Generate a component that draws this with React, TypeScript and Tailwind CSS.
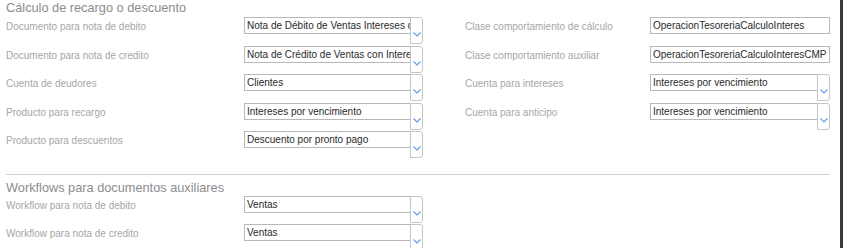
import React from "react";

const font = { fontFamily: '"Liberation Sans", Arial, sans-serif' };

function Chevron() {
  return (
    <svg width="8" height="5" viewBox="0 0 8 5" className="block">
      <polyline points="0.5,0.5 4,4 7.5,0.5" fill="none" stroke="#5f9ae0" strokeWidth="1.1" />
    </svg>
  );
}

function SelectBox({ value, width }: { value: string; width: string }) {
  return (
    <div className={`flex items-start ${width}`}>
      <div className="flex-1 h-[17px] border border-[#b8b8b8] bg-white px-[2px] text-[10px] leading-[15px] text-[#2a2a2a] whitespace-nowrap overflow-hidden">
        {value}
      </div>
      <div className="w-[13px] h-[27px] -ml-px border border-[#c6c6c6] rounded-r-[3px] flex justify-center pt-[14px]">
        <Chevron />
      </div>
    </div>
  );
}

function TextBox({ value, width }: { value: string; width: string }) {
  return (
    <div className={`${width} h-[17px] border border-[#b8b8b8] bg-white px-[2px] text-[10px] leading-[15px] text-[#2a2a2a] whitespace-nowrap overflow-hidden`}>
      {value}
    </div>
  );
}

type Field = { label: string; value: string; kind: "select" | "text" } | null;

function Row({ left, right, h = "h-[28.6px]" }: { left: Field; right: Field; h?: string }) {
  return (
    <div className={`flex ${h}`}>
      {left && (
        <>
          <div className="w-[238px] pt-[1px] text-[10px] leading-[17px] text-[#a6a6a6]">{left.label}</div>
          {left.kind === "select" ? (
            <SelectBox value={left.value} width="w-[179px]" />
          ) : (
            <TextBox value={left.value} width="w-[179px]" />
          )}
        </>
      )}
      <div className="w-[42px]" />
      {right && (
        <>
          <div className="w-[185px] pt-[1px] text-[10px] leading-[17px] text-[#a6a6a6]">{right.label}</div>
          {right.kind === "select" ? (
            <SelectBox value={right.value} width="w-[180px]" />
          ) : (
            <TextBox value={right.value} width="w-[180px]" />
          )}
        </>
      )}
    </div>
  );
}

const calculo: { left: Field; right: Field }[] = [
  {
    left: { label: "Documento para nota de debito", value: "Nota de Débito de Ventas Intereses de mora", kind: "select" },
    right: { label: "Clase comportamiento de cálculo", value: "OperacionTesoreriaCalculoInteres", kind: "text" },
  },
  {
    left: { label: "Documento para nota de credito", value: "Nota de Crédito de Ventas con Intereses", kind: "select" },
    right: { label: "Clase comportamiento auxiliar", value: "OperacionTesoreriaCalculoInteresCMP", kind: "text" },
  },
  {
    left: { label: "Cuenta de deudores", value: "Clientes", kind: "select" },
    right: { label: "Cuenta para intereses", value: "Intereses por vencimiento", kind: "select" },
  },
  {
    left: { label: "Producto para recargo", value: "Intereses por vencimiento", kind: "select" },
    right: { label: "Cuenta para anticipo", value: "Intereses por vencimiento", kind: "select" },
  },
  {
    left: { label: "Producto para descuentos", value: "Descuento por pronto pago", kind: "select" },
    right: null,
  },
];

const workflows: { left: Field; right: Field }[] = [
  { left: { label: "Workflow para nota de debito", value: "Ventas", kind: "select" }, right: null },
  { left: { label: "Workflow para nota de credito", value: "Ventas", kind: "select" }, right: null },
];

export default function App() {
  return (
    <div className="w-[843px] h-[248px] flex bg-white overflow-hidden" style={font}>
      <main className="flex-1 pl-[6px] pr-[4px]">
        <h2 className="h-[17px] text-[12.75px] leading-[16px] text-[#8c8c8c]">Cálculo de recargo o descuento</h2>
        {calculo.map((r, i) => (
          <Row key={i} left={r.left} right={r.right} />
        ))}
        <hr className="mt-[14px] w-[824px] border-t border-[#d0d0d0]" />
        <h2 className="mt-[5px] h-[16px] text-[12.75px] leading-[16px] text-[#8c8c8c]">Workflows para documentos auxiliares</h2>
        {workflows.map((r, i) => (
          <Row key={i} left={r.left} right={r.right} h="h-[28px]" />
        ))}
      </main>
      <div className="w-[3px] bg-[#3b3b3b]" />
    </div>
  );
}
